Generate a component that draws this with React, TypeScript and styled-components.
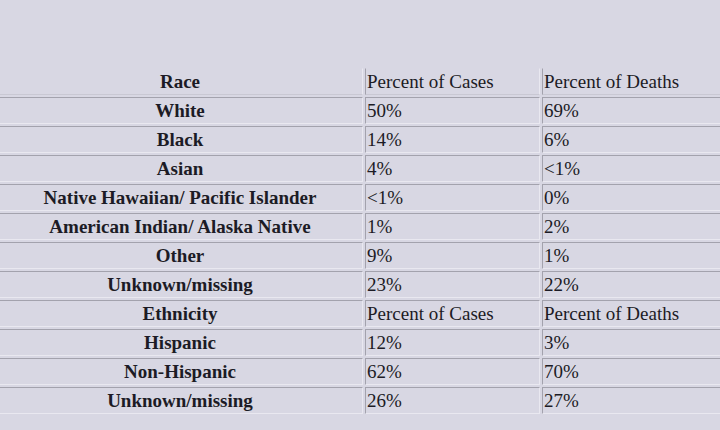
import React from "react";
import styled, { createGlobalStyle } from "styled-components";

const GlobalStyle = createGlobalStyle`
  html, body {
    margin: 0;
    padding: 0;
    background: #d8d7e3;
    overflow: hidden;
  }
  body {
    width: 720px;
    height: 430px;
    font-family: "Liberation Serif", "Times New Roman", serif;
    color: #1c1b25;
  }
`;

const Page = styled.div`
  width: 720px;
  height: 430px;
  padding-top: 66px;
  box-sizing: border-box;
  overflow: hidden;
`;

const Table = styled.table`
  margin-left: -5px;
  width: 760px;
  table-layout: fixed;
  border-collapse: separate;
  border-spacing: 2px;
  font-family: "Liberation Serif", "Times New Roman", serif;
  font-size: 19px;
  line-height: 23px;
  color: #1c1b25;
`;

const Cell = styled.td<{ $label?: boolean }>`
  padding: 1px;
  border-top: 1px solid #a3a2ad;
  border-left: 1px solid #a3a2ad;
  border-bottom: 1px solid #e9e8f0;
  border-right: 1px solid #e9e8f0;
  font-family: "Liberation Serif", "Times New Roman", serif;
  text-align: ${(p) => (p.$label ? "center" : "left")};
  font-weight: ${(p) => (p.$label ? 700 : 400)};
  white-space: nowrap;
  overflow: hidden;
`;

const HeadCell = styled(Cell)`
  border-top-color: transparent;
  border-bottom-color: #c9c8d3;
`;

interface IRow {
  label: string;
  cases: string;
  deaths: string;
}

const raceRows: IRow[] = [
  { label: "White", cases: "50%", deaths: "69%" },
  { label: "Black", cases: "14%", deaths: "6%" },
  { label: "Asian", cases: "4%", deaths: "<1%" },
  { label: "Native Hawaiian/ Pacific Islander", cases: "<1%", deaths: "0%" },
  { label: "American Indian/ Alaska Native", cases: "1%", deaths: "2%" },
  { label: "Other", cases: "9%", deaths: "1%" },
  { label: "Unknown/missing", cases: "23%", deaths: "22%" },
];

const ethnicityRows: IRow[] = [
  { label: "Hispanic", cases: "12%", deaths: "3%" },
  { label: "Non-Hispanic", cases: "62%", deaths: "70%" },
  { label: "Unknown/missing", cases: "26%", deaths: "27%" },
];

const DataRow = ({ row }: { row: IRow }) => (
  <tr>
    <Cell $label>{row.label}</Cell>
    <Cell>{row.cases}</Cell>
    <Cell>{row.deaths}</Cell>
  </tr>
);

export default function App() {
  return (
    <Page>
      <GlobalStyle />
      <Table>
        <colgroup>
          <col style={{ width: 366 }} />
          <col style={{ width: 175 }} />
          <col />
        </colgroup>
        <tbody>
          <tr>
            <HeadCell $label>Race</HeadCell>
            <HeadCell>Percent of Cases</HeadCell>
            <HeadCell>Percent of Deaths</HeadCell>
          </tr>
          {raceRows.map((row, key) => (
            <DataRow key={"r" + key} row={row} />
          ))}
          <tr>
            <Cell $label>Ethnicity</Cell>
            <Cell>Percent of Cases</Cell>
            <Cell>Percent of Deaths</Cell>
          </tr>
          {ethnicityRows.map((row, key) => (
            <DataRow key={"e" + key} row={row} />
          ))}
        </tbody>
      </Table>
    </Page>
  );
}
